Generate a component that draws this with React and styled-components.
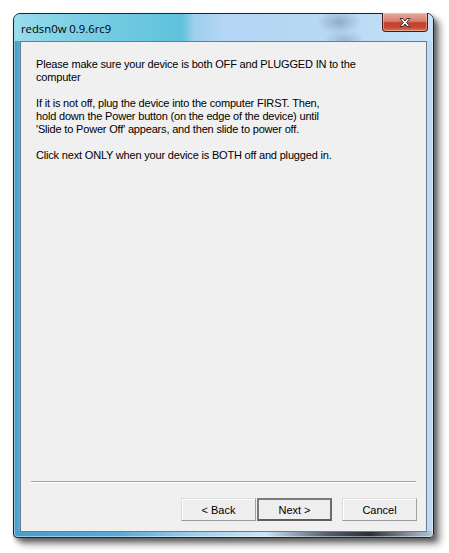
import React from 'react';
import styled, { createGlobalStyle } from 'styled-components';

const Global = createGlobalStyle`
  html, body {
    margin: 0;
    padding: 0;
    background: #ffffff;
  }
`;

const Page = styled.div`
  width: 449px;
  height: 553px;
  padding: 13px 0 0 13px;
  box-sizing: border-box;
`;

const Window = styled.div`
  width: 421px;
  height: 525px;
  box-sizing: border-box;
  border: 1px solid #1a2530;
  border-radius: 7px 7px 4px 4px;
  display: flex;
  flex-direction: column;
  background:
    linear-gradient(to right, #4a9cca 0%, #5aa9d6 25%, #a5d0f0 45%, #c9e4f8 60%, #525c6c 75%, #2a2e38 85%, #8c9aaa 95%, #b0c6da 100%) bottom / 100% 6px no-repeat,
    linear-gradient(to right, #3f98c4 0%, #56b0d3 1.5%, #9fcdee 6%, #b4d6f4 50%, #c0ddf6 98%, #b8d8f4 100%);
  box-shadow:
    inset 0 0 0 1px rgba(255, 255, 255, 0.45),
    6px 6px 7px rgba(0, 0, 0, 0.45),
    2px 3px 4px rgba(0, 0, 0, 0.35);
  position: relative;
`;

const TitleBar = styled.div`
  height: 27px;
  flex: none;
  display: flex;
  align-items: center;
  padding-left: 7px;
  border-radius: 6px 6px 0 0;
  background:
    radial-gradient(ellipse 22px 12px at 325px 8px, rgba(70, 90, 110, 0.35), transparent),
    radial-gradient(ellipse 20px 10px at 330px 26px, rgba(70, 90, 110, 0.25), transparent),
    linear-gradient(to right, #9adcec 0%, #7ccfe5 15%, #5fc2dc 40%, #9ed0ee 43%, #b3d6f4 50%, #b8d9f5 80%, #c8e3f8 100%);
`;

const Title = styled.span`
  font-family: "Open Sans", "Noto Sans", sans-serif;
  font-size: 11.3px;
  color: #000;
  margin-top: 2px;
`;

const CloseButton = styled.div`
  position: absolute;
  top: -1px;
  right: 5px;
  width: 44px;
  height: 18px;
  border: 1px solid #4a1a14;
  border-top: none;
  border-radius: 0 0 4px 4px;
  display: flex;
  align-items: center;
  justify-content: center;
  background: linear-gradient(to bottom, #e8a89c 0%, #d9806f 45%, #c4402a 55%, #c54b33 80%, #d97a5a 100%);
  box-shadow: inset 0 0 0 1px rgba(255, 220, 210, 0.45);
`;

const Client = styled.div`
  flex: 1;
  margin: 0 6px 5px 6px;
  border: 1px solid #6d7b8a;
  background: #f0f0f0;
  display: flex;
  flex-direction: column;
  padding: 16px 9px 10px 15px;
  box-sizing: border-box;
`;

const Message = styled.div`
  flex: 1;
  font-family: "Liberation Sans", Arial, sans-serif;
  font-size: 11px;
  letter-spacing: -0.18px;
  line-height: 13px;
  color: #000;
`;

const Para = styled.p`
  margin: 0 0 13px 0;
  white-space: nowrap;
`;

const Separator = styled.div`
  height: 1px;
  background: #a0a0a0;
  border-bottom: 1px solid #ffffff;
  margin: 0 1px 15px -5px;
`;

const Buttons = styled.div`
  display: flex;
  justify-content: flex-end;
  align-items: center;
`;

const Button = styled.button`
  width: 75px;
  height: 23px;
  margin-left: ${p => p.gap || 0}px;
  box-sizing: border-box;
  font-family: "Liberation Sans", Arial, sans-serif;
  font-size: 11px;
  color: #000;
  background: #eeeeee;
  padding: 0;
  border: ${p => (p.primary ? '2px solid' : '1px solid')};
  border-color: ${p => (p.primary ? '#7a7a7a #6a6a6a #5e5e5e #7a7a7a' : '#dcdcdc #a0a0a0 #9a9a9a #dcdcdc')};
  box-shadow: ${p => (p.primary ? 'none' : 'inset 1px 1px 0 #ffffff')};
`;

function CloseIcon() {
  return (
    <svg width="14" height="11" viewBox="0 0 14 11">
      <path
        d="M2 1.5 L5 1.5 L7 4 L9 1.5 L12 1.5 L8.6 5.5 L12 9.5 L9 9.5 L7 7 L5 9.5 L2 9.5 L5.4 5.5 Z"
        fill="#ffffff"
        stroke="#3a3030"
        strokeWidth="1"
        strokeLinejoin="round"
      />
    </svg>
  );
}

export default function App() {
  return (
    <Page>
      <Global />
      <Window>
        <TitleBar>
          <Title>redsn0w 0.9.6rc9</Title>
        </TitleBar>
        <CloseButton>
          <CloseIcon />
        </CloseButton>
        <Client>
          <Message>
            <Para>
              Please make sure your device is both OFF and PLUGGED IN to the
              <br />
              computer
            </Para>
            <Para>
              If it is not off, plug the device into the computer FIRST. Then,
              <br />
              hold down the Power button (on the edge of the device) until
              <br />
              'Slide to Power Off' appears, and then slide to power off.
            </Para>
            <Para>Click next ONLY when your device is BOTH off and plugged in.</Para>
          </Message>
          <Separator />
          <Buttons>
            <Button>&lt; Back</Button>
            <Button primary gap={1}>Next &gt;</Button>
            <Button gap={10}>Cancel</Button>
          </Buttons>
        </Client>
      </Window>
    </Page>
  );
}
